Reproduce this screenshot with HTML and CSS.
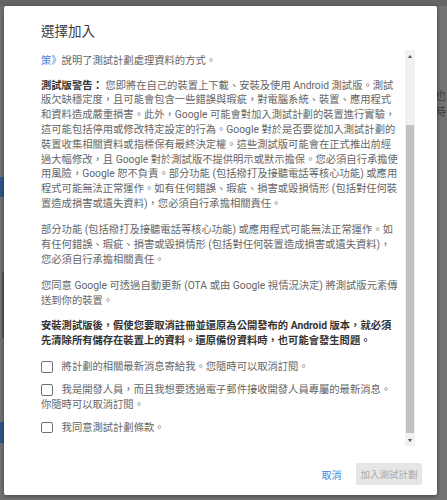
FILE: index.html
```html
<!DOCTYPE html>
<html lang="zh-Hant">
<head>
<meta charset="utf-8">
<title>選擇加入</title>
<link rel="stylesheet" href="styles.css">
</head>
<body>
  <div class="backdrop">
    <div class="bg-topbar"></div>
    <span class="bg-text bg-text-1">也</span>
    <span class="bg-text bg-text-2">時</span>
    <span class="bg-blue bg-blue-1"></span>
    <span class="bg-blue bg-blue-2"></span>
    <span class="bg-rule"></span>
  </div>

  <div class="dialog" role="dialog">
    <h2 class="dialog-title">選擇加入</h2>
    <div class="dialog-body">
      <div class="content">
        <p class="p-intro"><a class="link">策》</a>說明了測試計劃處理資料的方式。</p>
        <p class="p-warning"><strong class="warn">測試版警告：</strong> 您即將在自己的裝置上下載、安裝及使用 Android 測試版。測試<br>版欠缺穩定度，且可能會包含一些錯誤與瑕疵，對電腦系統、裝置、應用程式<br>和資料造成嚴重損害。此外，Google 可能會對加入測試計劃的裝置進行實驗，<br>這可能包括停用或修改特定設定的行為。Google 對於是否要從加入測試計劃的<br>裝置收集相關資料或指標保有最終決定權。這些測試版可能會在正式推出前經<br>過大幅修改，且 Google 對於測試版不提供明示或默示擔保。您必須自行承擔使<br>用風險，Google 恕不負責。部分功能 (包括撥打及接聽電話等核心功能) 或應用<br>程式可能無法正常運作。如有任何錯誤、瑕疵、損害或毀損情形 (包括對任何裝<br>置造成損害或遺失資料)，您必須自行承擔相關責任。</p>
        <p class="p-features">部分功能 (包括撥打及接聽電話等核心功能) 或應用程式可能無法正常運作。如<br>有任何錯誤、瑕疵、損害或毀損情形 (包括對任何裝置造成損害或遺失資料)，<br>您必須自行承擔相關責任。</p>
        <p class="p-ota">您同意 Google 可透過自動更新 (OTA 或由 Google 視情況決定) 將測試版元素傳<br>送到你的裝置。</p>
        <p class="strong-note">安裝測試版後，假使您要取消註冊並還原為公開發布的 Android 版本，就必須<br>先清除所有儲存在裝置上的資料。還原備份資料時，也可能會發生問題。</p>
        <div class="checks">
          <label class="check"><span class="box"></span>將計劃的相關最新消息寄給我。您隨時可以取消訂閱。</label>
          <label class="check"><span class="box"></span>我是開發人員，而且我想要透過電子郵件接收開發人員專屬的最新消息。<br>你隨時可以取消訂閱。</label>
          <label class="check"><span class="box"></span>我同意測試計劃條款。</label>
        </div>
      </div>
      <div class="scrollbar">
        <span class="arrow arrow-up"></span>
        <div class="track"><div class="thumb"></div></div>
        <span class="arrow arrow-down"></span>
      </div>
    </div>
    <div class="actions">
      <button class="btn-text" type="button">取消</button>
      <button class="btn-primary" type="button" disabled>加入測試計劃</button>
    </div>
  </div>
</body>
</html>
```
FILE: styles.css
```css
* { box-sizing: border-box; }

html, body { margin: 0; }

body {
  width: 447px;
  height: 500px;
  overflow: hidden;
  position: relative;
  background: #737373;
  display: flex;
  align-items: flex-start;
  padding: 6px 0 0 4px;
  font-family: Roboto, "Noto Sans CJK TC", sans-serif;
}

/* dimmed page behind the dialog */
.backdrop {
  position: absolute;
  inset: 0;
  z-index: 0;
}
.bg-topbar {
  height: 6px;
  background: #656565;
}
.bg-text {
  position: absolute;
  left: 435px;
  font-size: 11px;
  line-height: 14px;
  color: #3d3d3d;
}
.bg-text-1 { top: 90px; }
.bg-text-2 { top: 106px; }
.bg-blue {
  position: absolute;
  left: 0;
  width: 4px;
  background: #2f5689;
}
.bg-blue-1 { top: 177px; height: 20px; }
.bg-blue-2 { top: 422px; height: 21px; }
.bg-rule {
  position: absolute;
  left: 2px;
  top: 272px;
  width: 2px;
  height: 66px;
  background: #555;
}

.dialog {
  position: relative;
  z-index: 1;
  width: 433px;
  height: 489px;
  background: #fff;
  border-radius: 2px;
  box-shadow: 0 1px 4px rgba(0, 0, 0, 0.45);
  display: flex;
  flex-direction: column;
}

.dialog-title {
  margin: 15px 0 0 37px;
  font-size: 13.5px;
  line-height: 20px;
  font-weight: 400;
  color: #3c3c3c;
}

.dialog-body {
  display: flex;
  height: 396px;
  margin: 9px 22px 0 37px;
}

.content {
  flex: 1;
  overflow: hidden;
  padding-top: 3.6px;
  font-size: 10.3px;
  line-height: 14.8px;
  color: #666;
}

.content p {
  margin: 0 0 10.2px;
  white-space: nowrap;
}
.content .p-warning { margin-bottom: 11.6px; }
.content .p-features { margin-bottom: 11.6px; }
.content .p-ota { margin-bottom: 10px; }

.link { color: #4a82d8; }

.warn {
  font-weight: 700;
  color: #333;
}

.content .strong-note {
  font-weight: 700;
  color: #333;
  margin-bottom: 0;
}

.checks {
  margin-top: 11.8px;
  display: flex;
  flex-direction: column;
  gap: 8px;
}

.check {
  display: block;
  white-space: nowrap;
}

.box {
  display: inline-block;
  width: 11.6px;
  height: 11.6px;
  border: 1.3px solid #707070;
  border-radius: 2px;
  margin-right: 9px;
  vertical-align: -2.5px;
}

.scrollbar {
  width: 10px;
  background: #f1f1f1;
  display: flex;
  flex-direction: column;
}

.arrow {
  height: 12px;
  display: flex;
  align-items: center;
  justify-content: center;
}
.arrow::before {
  content: "";
  width: 0;
  height: 0;
  border-left: 2.5px solid transparent;
  border-right: 2.5px solid transparent;
}
.arrow-up::before { border-bottom: 3px solid #505050; }
.arrow-down::before { border-top: 3px solid #505050; }

.track {
  flex: 1;
  padding: 63px 1px 1px;
}
.thumb {
  height: 308px;
  background: #c1c1c1;
}

.actions {
  display: flex;
  justify-content: flex-end;
  align-items: center;
  padding: 17px 15px 0 0;
}

.btn-text {
  border: none;
  background: none;
  padding: 0 6px;
  margin-right: 8.8px;
  height: 22px;
  font-family: inherit;
  font-size: 10px;
  color: #4a82d8;
}

.btn-primary {
  border: none;
  border-radius: 2px;
  background: #e6e6e6;
  color: #a9a9a9;
  height: 22px;
  padding: 0 4.4px;
  font-family: inherit;
  font-size: 9.5px;
}
```
